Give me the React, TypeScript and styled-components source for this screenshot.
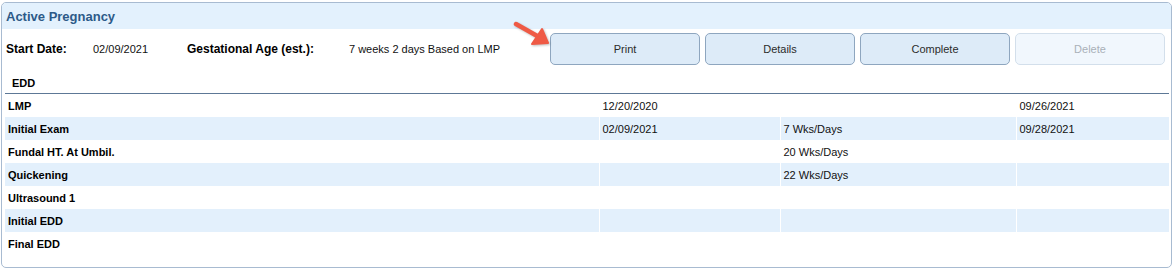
import React from 'react'
import styled, { createGlobalStyle } from 'styled-components'

//-----------------------------------------------------------------------------
// Data
//-----------------------------------------------------------------------------
const rows = [
  { label: 'LMP', date: '12/20/2020', age: '', edd: '09/26/2021' },
  { label: 'Initial Exam', date: '02/09/2021', age: '7 Wks/Days', edd: '09/28/2021' },
  { label: 'Fundal HT. At Umbil.', date: '', age: '20 Wks/Days', edd: '' },
  { label: 'Quickening', date: '', age: '22 Wks/Days', edd: '' },
  { label: 'Ultrasound 1', date: '', age: '', edd: '' },
  { label: 'Initial EDD', date: '', age: '', edd: '' },
  { label: 'Final EDD', date: '', age: '', edd: '' }
]

//-----------------------------------------------------------------------------
// Component
//-----------------------------------------------------------------------------
const App = () => {
  return (
    <>
      <GlobalStyle />
      <Panel>
        <PanelHeader>Active Pregnancy</PanelHeader>
        <InfoRow>
          <InfoLabel width={87}>Start Date:</InfoLabel>
          <InfoValue width={94}>02/09/2021</InfoValue>
          <InfoLabel width={162}>Gestational Age (est.):</InfoLabel>
          <InfoValue>7 weeks 2 days Based on LMP</InfoValue>
          <Buttons>
            <Arrow width="40" height="28" viewBox="0 0 40 28">
              <path d="M3 4 L26 17" stroke="#ef5a45" strokeWidth="4.5" strokeLinecap="round" />
              <path d="M35 23 L19 24 L29 9 Z" fill="#ef5a45" stroke="#ef5a45" strokeWidth="2" strokeLinejoin="round" />
            </Arrow>
            <Button>Print</Button>
            <Button>Details</Button>
            <Button>Complete</Button>
            <Button disabled>Delete</Button>
          </Buttons>
        </InfoRow>
        <Table>
          <colgroup>
            <col style={{ width: 594 }} />
            <col style={{ width: 181 }} />
            <col style={{ width: 236 }} />
            <col />
          </colgroup>
          <thead>
            <tr>
              <HeadCell colSpan={4}>EDD</HeadCell>
            </tr>
          </thead>
          <tbody>
            {rows.map((row, i) => (
              <Row key={row.label} striped={i % 2 === 1}>
                <LabelCell>{row.label}</LabelCell>
                <Cell>{row.date}</Cell>
                <Cell>{row.age}</Cell>
                <Cell>{row.edd}</Cell>
              </Row>
            ))}
          </tbody>
        </Table>
      </Panel>
    </>
  )
}

//-----------------------------------------------------------------------------
// Styled Components
//-----------------------------------------------------------------------------
const GlobalStyle = createGlobalStyle`
  body {
    margin: 0;
    padding: 2px 3px 0 1px;
    background: #ffffff;
    font-family: "Liberation Sans", Arial, sans-serif;
    color: #000000;
  }
`

const Panel = styled.div`
  border: 1px solid #a8bbd1;
  border-radius: 5px;
  padding: 0 2px 11px 3px;
  height: 266px;
  box-sizing: border-box;
  overflow: hidden;
`

const PanelHeader = styled.div`
  height: 26px;
  line-height: 27px;
  margin: 0 -2px 0 -3px;
  padding-left: 4px;
  background-color: #e3f1fd;
  color: #2d5a88;
  font-size: 13px;
  font-weight: bold;
  border-radius: 4px 4px 0 0;
`

const InfoRow = styled.div`
  display: flex;
  align-items: center;
  height: 31px;
  margin-top: 4px;
  padding-left: 1px;
  font-size: 11px;
`

const InfoLabel = styled.div<{ width?: number }>`
  width: ${({ width }) => (width ? `${width}px` : 'auto')};
  flex-shrink: 0;
  font-size: 12px;
  font-weight: bold;
`

const InfoValue = styled.div<{ width?: number }>`
  width: ${({ width }) => (width ? `${width}px` : 'auto')};
  flex-shrink: 0;
  font-size: 11px;
  color: #111;
`

const Buttons = styled.div`
  position: relative;
  display: flex;
  gap: 5px;
  margin-left: auto;
  margin-right: 4px;
`

const Arrow = styled.svg`
  position: absolute;
  left: -37px;
  top: -13px;
  filter: drop-shadow(1px 1px 1px rgba(0, 0, 0, 0.25));
`

const Button = styled.button`
  width: 150px;
  height: 32px;
  border-radius: 5px;
  border: 1px solid ${({ disabled }) => (disabled ? '#d3dfeb' : '#8ea6bf')};
  background-color: ${({ disabled }) => (disabled ? '#f1f7fd' : '#ddebf8')};
  color: ${({ disabled }) => (disabled ? '#a9b0b8' : '#2b2b2b')};
  font-family: "Liberation Sans", Arial, sans-serif;
  font-size: 11px;
  padding: 0;
`

const Table = styled.table`
  width: 100%;
  margin-top: 8px;
  border-collapse: collapse;
  table-layout: fixed;
  font-size: 11px;
`

const HeadCell = styled.th`
  height: 21px;
  padding: 0 0 0 7px;
  text-align: left;
  font-weight: bold;
  border-bottom: 1px solid #5d7896;
`

const Row = styled.tr<{ striped: boolean }>`
  height: 23px;
  background-color: ${({ striped }) => (striped ? '#e3f0fc' : '#ffffff')};
`

const Cell = styled.td`
  padding: 1px 0 0 3px;
  border-left: 1px solid #ffffff;
  color: #111;
  white-space: nowrap;
`

const LabelCell = styled.td`
  padding: 1px 0 0 3px;
  font-weight: bold;
`

export default App
